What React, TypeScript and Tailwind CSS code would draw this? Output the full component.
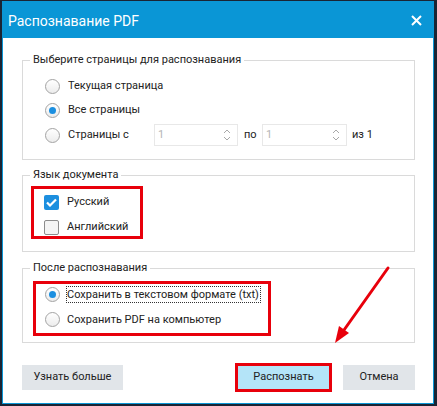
import React from "react";

function Radio({ checked }: { checked?: boolean }) {
  return (
    <span className="flex h-[15px] w-[15px] shrink-0 items-center justify-center rounded-full border border-[#a3a3a3] bg-[linear-gradient(#ffffff,#ececec)]">
      {checked && <span className="h-[7px] w-[7px] rounded-full bg-[#1b8fe0]" />}
    </span>
  );
}

function Checkbox({ checked }: { checked?: boolean }) {
  if (checked) {
    return (
      <span className="flex h-[15px] w-[15px] shrink-0 items-center justify-center rounded-[2px] bg-[#1c8fdf]">
        <svg width="11" height="9" viewBox="0 0 11 9">
          <polyline points="1,4.5 4,7.5 10,1.5" fill="none" stroke="#ffffff" strokeWidth="2.2" />
        </svg>
      </span>
    );
  }
  return <span className="h-[15px] w-[15px] shrink-0 rounded-[2px] border border-[#8c8c8c] bg-[#f4f4f4]" />;
}

function Spinner({ w }: { w: string }) {
  return (
    <div className={`flex h-[22px] items-center justify-between border border-[#e8e8e8] pl-[3px] pr-[6px] ${w}`}>
      <span className="text-[#b5b5b5]">1</span>
      <svg width="8" height="14" viewBox="0 0 8 14">
        <polyline points="1,5 4,2 7,5" fill="none" stroke="#a8a8a8" strokeWidth="1" />
        <polyline points="1,9 4,12 7,9" fill="none" stroke="#a8a8a8" strokeWidth="1" />
      </svg>
    </div>
  );
}

export default function App() {
  return (
    <div className="relative flex h-[406px] w-[437px] flex-col bg-[#1a2434] pb-[2px] pl-[2px] pr-[3px] pt-[1px] font-['Roboto','Noto_Sans',sans-serif] text-[11px] text-[#222222]">
      <div className="flex flex-1 flex-col bg-[#0a96d6] px-[1px] pb-[1px]">
        <div className="flex h-[37px] items-center justify-between pl-[5px] pr-[11px] pt-[2px]">
          <span className="text-[14px] leading-[16px] text-white">Распознавание PDF</span>
          <svg width="11" height="11" viewBox="0 0 11 11">
            <path d="M1 1 L10 10 M10 1 L1 10" stroke="#ffffff" strokeWidth="2" />
          </svg>
        </div>
        <div className="flex flex-1 flex-col bg-white pl-[19px] pr-[18px] pt-[14px]">
          <fieldset className="border border-[#dadada]">
            <legend className="ml-[7px] px-[3px] leading-[16px]">Выберите страницы для распознавания</legend>
            <div className="flex flex-col pb-[11px] pl-[22px] pt-[6px]">
              <div className="flex h-[24px] items-center gap-[8px]">
                <Radio />
                <span>Текущая страница</span>
              </div>
              <div className="flex h-[24px] items-center gap-[8px]">
                <Radio checked />
                <span>Все страницы</span>
              </div>
              <div className="flex h-[26px] items-center">
                <Radio />
                <span className="ml-[8px] w-[86px]">Страницы с</span>
                <Spinner w="w-[84px]" />
                <span className="ml-[6px] w-[12px]">по</span>
                <span className="ml-[6px]">
                  <Spinner w="w-[85px]" />
                </span>
                <span className="ml-[5px]">из 1</span>
              </div>
            </div>
          </fieldset>

          <fieldset className="mt-[7px] border border-[#dadada]">
            <legend className="ml-[7px] px-[3px] leading-[16px]">Язык документа</legend>
            <div className="pb-[12px]">
              <div className="ml-[8px] mt-[3px] flex w-[112px] flex-col gap-[10px] border-[3px] border-[#e8000b] pb-[1px] pl-[10px] pt-[6px]">
                <div className="flex h-[15px] items-center gap-[8px]">
                  <Checkbox checked />
                  <span>Русский</span>
                </div>
                <div className="flex h-[15px] items-center gap-[8px]">
                  <Checkbox />
                  <span>Английский</span>
                </div>
              </div>
            </div>
          </fieldset>

          <fieldset className="mt-[8px] border border-[#dadada]">
            <legend className="ml-[7px] px-[3px] leading-[16px]">После распознавания</legend>
            <div className="pb-[6px]">
              <div className="ml-[10px] mt-[5px] flex w-[238px] flex-col gap-[10px] border-[3px] border-[#e8000b] pb-[6px] pl-[9px] pt-[3px]">
                <div className="flex h-[15px] items-center">
                  <Radio checked />
                  <span className="ml-[6px] whitespace-nowrap border border-dotted border-[#333333] pr-[1px] leading-[15px]">
                    Сохранить в текстовом формате (txt)
                  </span>
                </div>
                <div className="flex h-[15px] items-center">
                  <Radio />
                  <span className="ml-[7px] whitespace-nowrap leading-[15px]">Сохранить PDF на компьютер</span>
                </div>
              </div>
            </div>
          </fieldset>

          <div className="mt-[20px] flex h-[29px] items-center">
            <div className="flex h-[25px] w-[101px] items-center justify-center bg-[#e1e5e9]">Узнать больше</div>
            <div className="flex-1" />
            <div className="flex h-[29px] w-[97px] items-center justify-center border-[3px] border-[#e8000b] bg-[#b4e4f8]">
              Распознать
            </div>
            <div className="ml-[11px] flex h-[25px] w-[72px] items-center justify-center bg-[#e1e5e9]">Отмена</div>
          </div>
        </div>
      </div>

      <svg className="pointer-events-none absolute left-0 top-0" width="437" height="406" viewBox="0 0 437 406">
        <line x1="388" y1="268" x2="344" y2="330" stroke="#e8000b" strokeWidth="3" strokeLinecap="round" />
        <polygon points="335,343 349,333 339,326" fill="#e8000b" />
      </svg>
    </div>
  );
}
